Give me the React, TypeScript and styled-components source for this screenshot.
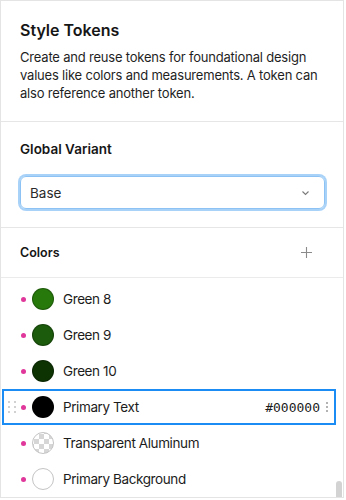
import React from "react";
import styled, { createGlobalStyle } from "styled-components";

interface Token {
  name: string;
  color?: string;
  kind?: "solid" | "transparent" | "light";
  value?: string;
  selected?: boolean;
}

const tokens: Token[] = [
  { name: "Green 8", color: "#27790c" },
  { name: "Green 9", color: "#1c5a0c" },
  { name: "Green 10", color: "#0d3303" },
  { name: "Primary Text", color: "#000000", value: "#000000", selected: true },
  { name: "Transparent Aluminum", kind: "transparent" },
  { name: "Primary Background", kind: "light", color: "#ffffff" },
];

const App: React.FC = () => {
  return (
    <>
      <GlobalStyle />
      <Panel>
        {/* Intro */}
        <Section>
          <Title>Style Tokens</Title>
          <Description>
            Create and reuse tokens for foundational design values like colors
            and measurements. A token can also reference another token.
          </Description>
        </Section>

        {/* Variant picker */}
        <VariantSection>
          <SubTitle>Global Variant</SubTitle>
          <Select>
            <span>Base</span>
            <svg width="9" height="6" viewBox="0 0 9 6">
              <path d="M1.5 1.5 L4.5 4.5 L7.5 1.5" fill="none" stroke="#7a7a7a" strokeWidth="1.1" />
            </svg>
          </Select>
        </VariantSection>

        {/* Colors */}
        <GroupHeader>
          <GroupTitle>Colors</GroupTitle>
          <AddButton aria-label="Add color">
            <svg width="13" height="13" viewBox="0 0 13 13">
              <path d="M6.5 1 V12 M1 6.5 H12" stroke="#8a8a8a" strokeWidth="1.1" />
            </svg>
          </AddButton>
        </GroupHeader>

        <List>
          {tokens.map((t) => (
            <Row key={t.name} $selected={t.selected}>
              <Handle $visible={t.selected}>
                {Array.from({ length: 6 }).map((_, i) => (
                  <i key={i} />
                ))}
              </Handle>
              <Dot />
              <Swatch $color={t.color} $kind={t.kind} />
              <Name>{t.name}</Name>
              {t.value && (
                <>
                  <Value>{t.value}</Value>
                  <More>
                    <i />
                    <i />
                    <i />
                  </More>
                </>
              )}
            </Row>
          ))}
          <ScrollThumb />
        </List>
      </Panel>
    </>
  );
};

export default App;

// Styles
const GlobalStyle = createGlobalStyle`
  body {
    margin: 0;
    background: #ffffff;
    font-family: Inter, "Noto Sans", "Liberation Sans", sans-serif;
    color: #1c1c1c;
  }
`;

const Panel = styled.div`
  width: 344px;
  height: 498px;
  box-sizing: border-box;
  border: 1px solid #e4e4e4;
  overflow: hidden;
  position: relative;
  background: #fff;
`;

const Section = styled.section`
  padding: 19px 19px 19px;
  border-bottom: 1px solid #e6e6e6;
`;

const Title = styled.h1`
  margin: 0;
  font-size: 16px;
  line-height: 20px;
  font-weight: 600;
  color: #161616;
`;

const Description = styled.p`
  margin: 8px 0 0;
  font-size: 13px;
  line-height: 18px;
  letter-spacing: -0.2px;
  color: #1f1f1f;
`;

const VariantSection = styled(Section)`
  padding: 18px 18px 18px 19px;
`;

const SubTitle = styled.h2`
  margin: 0;
  font-size: 13.5px;
  line-height: 18px;
  font-weight: 600;
  color: #161616;
`;

const Select = styled.div`
  margin-top: 18px;
  height: 33px;
  box-sizing: border-box;
  display: flex;
  align-items: center;
  justify-content: space-between;
  padding: 0 14px 0 9px;
  border: 1px solid #8cc3f4;
  box-shadow: 0 0 0 2px #a9d2f8;
  border-radius: 6px;
  font-size: 13.5px;
  color: #2a2a2a;
`;

const GroupHeader = styled.div`
  height: 50px;
  box-sizing: border-box;
  display: flex;
  align-items: center;
  justify-content: space-between;
  padding: 0 30px 0 19px;
  border-bottom: 1px solid #ebebeb;
`;

const GroupTitle = styled.h3`
  margin: 0;
  font-size: 12.5px;
  font-weight: 600;
  color: #161616;
`;

const AddButton = styled.button`
  border: 0;
  background: none;
  padding: 0;
  display: flex;
  cursor: pointer;
`;

const List = styled.div`
  padding: 3px 7px 0 1px;
`;

const Row = styled.div<{ $selected?: boolean }>`
  height: 36px;
  box-sizing: border-box;
  display: flex;
  align-items: center;
  padding: 0 6px 0 4px;
  border: 2px solid ${(p) => (p.$selected ? "#1a8cf4" : "transparent")};
`;

const Handle = styled.div<{ $visible?: boolean }>`
  width: 8px;
  display: grid;
  grid-template-columns: 2px 2px;
  column-gap: 4px;
  row-gap: 3px;
  visibility: ${(p) => (p.$visible ? "visible" : "hidden")};

  i {
    width: 2px;
    height: 2px;
    border-radius: 50%;
    background: #c2c2c2;
  }
`;

const Dot = styled.span`
  width: 5px;
  height: 5px;
  border-radius: 50%;
  background: #e0379b;
  margin-left: 5px;
`;

const Swatch = styled.span<{ $color?: string; $kind?: string }>`
  width: 22px;
  height: 22px;
  box-sizing: border-box;
  border-radius: 50%;
  margin-left: 6px;
  flex-shrink: 0;
  background: ${(p) =>
    p.$kind === "transparent"
      ? "repeating-conic-gradient(#d6d6d6 0 25%, #ffffff 0 50%) 1px 1px / 10px 10px"
      : p.$color};
  border: 1px solid
    ${(p) => (p.$kind ? "#c4c4c4" : "rgba(0, 0, 0, 0.25)")};
`;

const Name = styled.span`
  margin-left: 9px;
  font-size: 13.5px;
  letter-spacing: -0.4px;
  color: #1c1c1c;
  flex: 1;
`;

const Value = styled.span`
  font-family: "DejaVu Sans Mono", "Liberation Mono", monospace;
  font-size: 13px;
  color: #1c1c1c;
`;

const More = styled.span`
  display: flex;
  flex-direction: column;
  gap: 2px;
  margin-left: 6px;

  i {
    width: 2px;
    height: 2px;
    border-radius: 50%;
    background: #9a9a9a;
  }
`;

const ScrollThumb = styled.div`
  position: absolute;
  right: 1px;
  bottom: -4px;
  width: 6px;
  height: 20px;
  border-radius: 3px;
  background: #d3d3d3;
`;
